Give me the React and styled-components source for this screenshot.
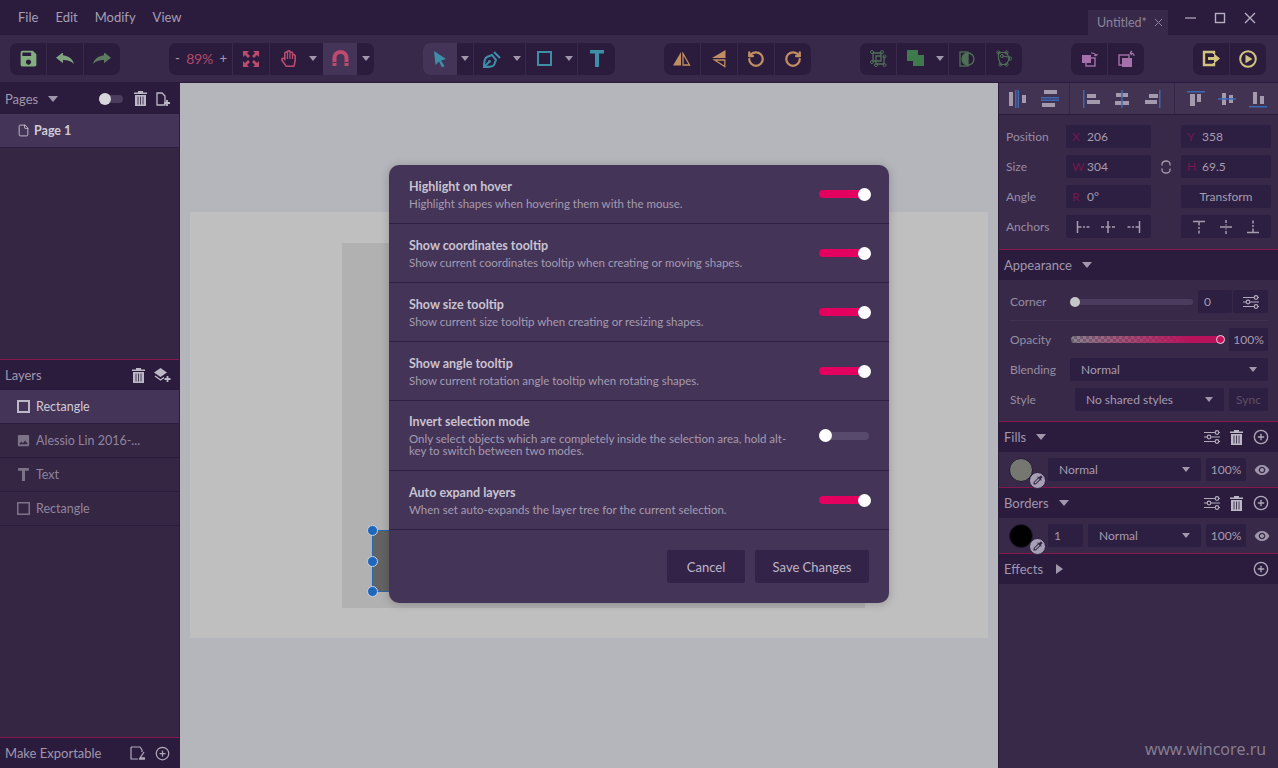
import React from 'react';
import styled, { createGlobalStyle } from 'styled-components';
import { MdSave, MdColorize, MdVisibility, MdImage } from 'react-icons/md';
import { FaRegHandPaper } from 'react-icons/fa';
import { RotateCcw, RotateCw, CirclePlus, File as FileIcon } from 'lucide-react';

const GlobalStyle = createGlobalStyle`
  html, body { margin: 0; padding: 0; background: #2b1c3e; }
  * { box-sizing: border-box; }
`;

const Page = styled.div`
  width: 1278px;
  height: 768px;
  position: relative;
  overflow: hidden;
  display: flex;
  flex-direction: column;
  font-family: Lato, "Open Sans", sans-serif;
  color: #a59cb0;
  font-size: 12px;
`;

/* title bar */
const MenuBar = styled.div`
  height: 35px;
  flex: none;
  background: #2b1c3e;
  display: flex;
  align-items: flex-end;
  padding-left: 18px;
`;
const MenuItem = styled.span`
  font-size: 13px;
  line-height: 35px;
  height: 35px;
  margin-right: ${p => p.$gap}px;
  color: #a69eb1;
`;
const DocTab = styled.div`
  margin-left: auto;
  width: 80px;
  height: 25px;
  background: #38294a;
  display: flex;
  align-items: center;
  padding-left: 9px;
  font-size: 12.5px;
  color: #8c8398;
  gap: 7px;
`;
const WinControls = styled.div`
  display: flex;
  height: 35px;
  width: 110px;
  align-items: center;
  padding-left: 15px;
  gap: 15px;
`;

/* main toolbar */
const Toolbar = styled.div`
  height: 48px;
  flex: none;
  background: #38294a;
  display: flex;
  align-items: center;
  gap: 49px;
  padding: 0 10px;
  border-bottom: 1px solid #2b1c3e;
`;
const ToolGroup = styled.div`
  height: 32px;
  background: #2b1c3e;
  border-radius: 7px;
  display: flex;
  overflow: hidden;
  flex: none;
`;
const Cell = styled.div`
  width: ${p => p.$w}px;
  height: 32px;
  display: flex;
  align-items: center;
  justify-content: ${p => (p.$split ? 'flex-start' : 'center')};
  background: ${p => (p.$active ? '#443457' : 'transparent')};
  border-right: ${p => (p.$sep ? '1px solid #38294a' : 'none')};
`;
const IconSlot = styled.div`
  width: 36px;
  display: flex;
  justify-content: center;
`;
const Caret = styled.span`
  width: 0;
  height: 0;
  flex: none;
  margin-left: ${p => p.$ml || 0}px;
  border-left: ${p => p.$size || 4}px solid transparent;
  border-right: ${p => p.$size || 4}px solid transparent;
  border-top: ${p => (p.$size ? p.$size + 1 : 5)}px solid #a097ad;
`;
const ZoomText = styled.div`
  width: 100%;
  display: flex;
  justify-content: space-between;
  padding: 0 5px 0 6px;
  font-size: 14px;
  color: #a059a0;
  span:first-child, span:last-child { color: #a59cb0; font-size: 13px; }
  span:nth-child(2) { color: #b04a6c; letter-spacing: -0.2px; }
`;

/* body */
const Body = styled.div`
  flex: 1;
  display: flex;
  min-height: 0;
`;
const LeftPanel = styled.div`
  width: 180px;
  flex: none;
  background: #35263f;
  background: #352644;
  display: flex;
  flex-direction: column;
  border-right: 1px solid #2b1c3e;
`;
const PanelHead = styled.div`
  height: ${p => p.$h || 31}px;
  flex: none;
  background: #2b1c3e;
  display: flex;
  align-items: center;
  padding: 0 ${p => p.$pr || 9}px 0 5px;
  font-size: 13px;
  color: #a097ad;
  border-top: ${p => (p.$line ? '1px solid #86184f' : 'none')};
`;
const HeadActions = styled.div`
  margin-left: auto;
  display: flex;
  align-items: center;
  gap: ${p => p.$gap || 7}px;
`;
const MiniSwitch = styled.div`
  position: relative;
  width: 24px;
  height: 8px;
  border-radius: 4px;
  background: #4b3c5e;
  margin-right: 2px;
  &::before {
    content: '';
    position: absolute;
    left: 0;
    top: -2px;
    width: 12px;
    height: 12px;
    border-radius: 50%;
    background: #d7d6da;
  }
`;
const TreeRow = styled.div`
  height: 34px;
  flex: none;
  display: flex;
  align-items: center;
  padding-left: ${p => p.$pl}px;
  gap: ${p => p.$gap}px;
  background: ${p => (p.$active ? '#443457' : 'transparent')};
  border-bottom: 1px solid #2b1c3e;
  color: ${p => (p.$active ? '#d0cbd6' : '#8f859c')};
  font-size: 12.5px;
  font-weight: ${p => (p.$bold ? 700 : 400)};
`;
const Spacer = styled.div`
  flex: 1;
`;

/* canvas */
const Canvas = styled.div`
  flex: 1;
  background: #b5b6bb;
  position: relative;
  overflow: hidden;
`;
const Artboard = styled.div`
  position: absolute;
  left: 10px;
  top: 129px;
  width: 798px;
  height: 426px;
  background: #bfbfbf;
`;
const ImageLayer = styled.div`
  position: absolute;
  left: 152px;
  top: 31px;
  width: 523px;
  height: 365px;
  background: #b1b1b1;
`;
const Selected = styled.div`
  position: absolute;
  left: 30px;
  top: 287px;
  width: 200px;
  height: 62px;
  background: #636363;
  border: 1px solid #2c66ab;
`;
const Handle = styled.div`
  position: absolute;
  left: -6px;
  top: ${p => p.$top}px;
  width: 11px;
  height: 11px;
  border-radius: 50%;
  background: #1f67bd;
  border: 1px solid #c8d3e0;
`;

/* right panel */
const RightPanel = styled.div`
  width: 280px;
  flex: none;
  background: #382949;
  display: flex;
  flex-direction: column;
  border-left: 1px solid #2b1c3e;
`;
const AlignBar = styled.div`
  height: 32px;
  flex: none;
  background: #423352;
  display: flex;
  border-bottom: 1px solid #2b1c3e;
`;
const AlignGroup = styled.div`
  display: flex;
  align-items: center;
  width: ${p => p.$w}px;
  padding-left: ${p => p.$pl}px;
  border-right: ${p => (p.$sep ? '1px solid #35264a' : 'none')};
`;
const AlignCell = styled.div`
  width: 31px;
  display: flex;
  justify-content: center;
`;
const PropGrid = styled.div`
  display: grid;
  grid-template-columns: 60px 85px 30px 90px;
  grid-auto-rows: 23px;
  row-gap: 7px;
  padding: 10px 0 11px 7px;
  align-items: center;
  justify-items: stretch;
`;
const Label = styled.span`
  color: #968da2;
  font-size: 12px;
`;
const Field = styled.div`
  height: 23px;
  background: #2d1f41;
  border-radius: 2px;
  display: flex;
  align-items: center;
  padding-left: ${p => p.$pl ?? 6}px;
  justify-content: ${p => (p.$center ? 'center' : 'flex-start')};
  color: ${p => (p.$dim ? '#5d5069' : '#a59cb0')};
  font-size: 12px;
  width: ${p => (p.$w ? `${p.$w}px` : 'auto')};
  flex: ${p => (p.$w ? 'none' : '1')};
`;
const Prefix = styled.span`
  width: 15px;
  color: #76174f;
  flex: none;
`;
const LinkCell = styled.div`
  display: flex;
  justify-content: center;
`;
const Anchors = styled(Field)`
  justify-content: space-around;
  padding: 0 4px;
`;
const AppearanceBody = styled.div`
  padding: 10px 10px 10px 11px;
  display: flex;
  flex-direction: column;
  gap: 7px;
`;
const ARow = styled.div`
  height: 23px;
  display: flex;
  align-items: center;
  gap: ${p => p.$gap || 0}px;
`;
const ALabel = styled(Label)`
  width: 60px;
  flex: none;
`;
const Rule = styled.div`
  height: 1px;
  background: #413250;
`;
const Track = styled.div`
  position: relative;
  width: ${p => p.$w}px;
  height: 6px;
  margin-left: 3px;
  border-radius: 3px;
  background: #4b3c5e;
`;
const Knob = styled.div`
  position: absolute;
  left: -3px;
  top: -2px;
  width: 10px;
  height: 10px;
  border-radius: 50%;
  background: #c6c5c9;
`;
const OpacityTrack = styled.div`
  position: relative;
  width: 150px;
  height: 7px;
  margin-left: 1px;
  margin-right: 8px;
  border-radius: 4px;
  background:
    linear-gradient(90deg, rgba(190, 14, 88, 0) 0%, #b8125a 80%),
    repeating-conic-gradient(#6c6470 0% 25%, #8b8490 0% 50%) 0 0 / 6px 6px;
`;
const OpacityKnob = styled.div`
  position: absolute;
  right: -4px;
  top: -1px;
  width: 9px;
  height: 9px;
  border-radius: 50%;
  background: #c5125d;
  border: 1px solid #e8d9e2;
`;
const Select = styled(Field)`
  justify-content: space-between;
  padding: 0 ${p => p.$pr || 11}px 0 ${p => p.$pl || 11}px;
`;
const TuneButton = styled(Field)`
  padding: 0;
  justify-content: center;
`;
const StyleRow = styled.div`
  height: 35px;
  flex: none;
  display: flex;
  align-items: center;
  padding-left: 10px;
`;
const SwatchWrap = styled.div`
  position: relative;
  width: 24px;
  height: 24px;
  flex: none;
  margin-right: 15px;
`;
const Swatch = styled.div`
  width: 24px;
  height: 24px;
  border-radius: 50%;
  background: ${p => p.$color};
  border: 1px solid #241733;
`;
const PenBadge = styled.div`
  position: absolute;
  right: -13px;
  bottom: -7px;
  width: 17px;
  height: 17px;
  border-radius: 50%;
  background: #a79fb4;
  border: 1px solid #2b1c3e;
  display: flex;
  align-items: center;
  justify-content: center;
  color: #38294a;
`;
const EyeSlot = styled.div`
  width: 31px;
  display: flex;
  justify-content: center;
  color: #a097ad;
`;

/* dialog */
const Dialog = styled.div`
  position: absolute;
  left: 389px;
  top: 165px;
  width: 500px;
  height: 438px;
  background: #443457;
  border-radius: 10px;
  box-shadow: 0 1px 10px rgba(0, 0, 0, 0.22);
  display: flex;
  flex-direction: column;
`;
const SettingRow = styled.div`
  flex: none;
  height: ${p => p.$h}px;
  display: flex;
  align-items: center;
  justify-content: space-between;
  padding: 0 20px;
  border-bottom: 1px solid #2f2143;
`;
const SettingText = styled.div`
  width: 392px;
`;
const SettingTitle = styled.div`
  font-size: 12.5px;
  font-weight: 700;
  line-height: 15px;
  color: #c9c3d1;
`;
const SettingDesc = styled.div`
  font-size: 11.5px;
  line-height: 12px;
  margin-top: 4px;
  color: #a59cb2;
`;
const Toggle = styled.div`
  position: relative;
  width: 50px;
  height: 8px;
  border-radius: 4px;
  background: ${p => (p.$on ? '#e4005e' : '#584a6c')};
  &::after {
    content: '';
    position: absolute;
    top: -2.5px;
    left: ${p => (p.$on ? '39px' : '0')};
    width: 13px;
    height: 13px;
    border-radius: 50%;
    background: #fff;
  }
`;
const DialogFooter = styled.div`
  flex: 1;
  display: flex;
  justify-content: flex-end;
  gap: 10px;
  padding: 20px 20px 0 0;
`;
const Button = styled.div`
  height: 33px;
  width: ${p => p.$w}px;
  background: #342349;
  border-radius: 2px;
  color: #bdb6c6;
  font-size: 13px;
  display: flex;
  align-items: center;
  justify-content: center;
`;
const Watermark = styled.div`
  position: absolute;
  right: 12px;
  bottom: 8px;
  font-family: "Open Sans", sans-serif;
  font-size: 16px;
  color: rgba(255, 255, 255, 0.42);
`;

const GREEN = '#83ae7f';
const PINK = '#bd4b70';
const TEAL = '#3f8ea8';
const TAN = '#c08e62';
const DIMGREEN = '#4f7055';
const VIOLET = '#a671ab';
const YELLOW = '#d2c47f';
const GREY = '#a097ad';
const LINE = '#3b68b2';
const BAR = '#a39bad';

const Ico = ({ w = 20, h = 20, vb, children }) => (
  <svg width={w} height={h} viewBox={vb || `0 0 ${w} ${h}`} fill="none">{children}</svg>
);

const ArrowBack = ({ color, flip }) => (
  <svg width="18" height="11" viewBox="3 6 18 14" preserveAspectRatio="none">
    <path d="M10 9V5l-7 7 7 7v-4.1c5 0 8.5 1.6 11 5.1-1-5-4-10-11-11z" fill={color} transform={flip ? 'matrix(-1 0 0 1 24 0)' : undefined} />
  </svg>
);

const FitIcon = () => (
  <Ico w={18} h={18}>
    <g fill={PINK}>
      <path d="M1 1h6L5 3l3 3-2 2-3-3-2 2z" />
      <path d="M17 1h-6l2 2-3 3 2 2 3-3 2 2z" />
      <path d="M1 17h6l-2-2 3-3-2-2-3 3-2-2z" />
      <path d="M17 17h-6l2-2-3-3 2-2 3 3 2-2z" />
    </g>
  </Ico>
);
const MagnetIcon = () => (
  <Ico w={17} h={17}>
    <path d="M2.5 16V8a6 6 0 0 1 12 0v8" stroke={PINK} strokeWidth="4" />
    <path d="M0.5 12.5h4M12.5 12.5h4" stroke="#443457" strokeWidth="1" />
  </Ico>
);
const PointerIcon = () => (
  <Ico w={14} h={18}>
    <path d="M1 1l12 8-5 1.5 3.5 5.5-2.5 1.5L6 11.5 2.5 15z" fill={TEAL} />
  </Ico>
);
const PenIcon = () => (
  <Ico w={18} h={18}>
    <path d="M1 17c0-5 1-9 3-10l5-2 4 5-2 5c-1 2-5 2-10 2z" stroke={TEAL} strokeWidth="2" />
    <path d="M1 17l5-5M11 2l6 6" stroke={TEAL} strokeWidth="2" />
    <circle cx="6.5" cy="11.5" r="1.4" fill={TEAL} />
  </Ico>
);
const SquareIcon = ({ color = TEAL, size = 15, sw = 2 }) => (
  <Ico w={size} h={size}>
    <rect x={sw / 2} y={sw / 2} width={size - sw} height={size - sw} stroke={color} strokeWidth={sw} />
  </Ico>
);
const TIcon = ({ color = TEAL, w = 14, h = 17 }) => (
  <svg width={w} height={h} viewBox="0 0 14 17">
    <path d="M0 0h14v3.5H9V17H5V3.5H0z" fill={color} />
  </svg>
);
const FlipH = () => (
  <Ico w={18} h={14}>
    <path d="M8 0v13.5H0z" fill={TAN} />
    <path d="M10 1.5l6.5 11.5H10z" stroke={TAN} strokeWidth="1.3" />
  </Ico>
);
const FlipV = () => (
  <Ico w={14} h={18}>
    <path d="M13.5 0v8H0z" fill={TAN} />
    <path d="M12.8 10H2.5l10.3 6.5z" stroke={TAN} strokeWidth="1.3" />
  </Ico>
);
const GroupIcon = () => (
  <Ico w={17} h={17}>
    <path d="M3 3h8v3M14 6v8H6v-3M3 3v8h3M6 6h5v5H6z" stroke={DIMGREEN} strokeWidth="1.3" />
    {[[2, 2], [12, 2], [2, 12], [14.5, 6.5], [14.5, 15], [6, 15]].map(([x, y]) => (
      <circle key={`${x}${y}`} cx={x} cy={y} r="1.5" stroke={DIMGREEN} />
    ))}
  </Ico>
);
const UnionIcon = () => (
  <Ico w={17} h={17}>
    <path d="M0 0h11v5h6v11H6v-5H0z" fill="#3f7a4c" />
  </Ico>
);
const MaskIcon = () => (
  <Ico w={16} h={16}>
    <rect x="1" y="1" width="8" height="14" stroke={DIMGREEN} strokeWidth="1.3" />
    <circle cx="9" cy="8" r="6" stroke={DIMGREEN} strokeWidth="1.3" />
    <path d="M9 2a6 6 0 0 0 0 12z" fill={DIMGREEN} />
  </Ico>
);
const NodesIcon = () => (
  <Ico w={17} h={17}>
    <path d="M2.5 2.5h8l3 6-3 6h-6l-2-6zM6 6l6 1" stroke={DIMGREEN} strokeWidth="1.2" />
    {[[2.5, 2.5], [10.5, 2.5], [14, 8.5], [10.5, 14.5], [4.5, 14.5], [6, 6]].map(([x, y]) => (
      <circle key={`${x}${y}`} cx={x} cy={y} r="1.6" stroke={DIMGREEN} />
    ))}
  </Ico>
);
const ArrangeIcon = ({ back }) => (
  <Ico w={17} h={17}>
    {back ? (
      <>
        <rect x="1" y="5" width="10" height="10" stroke={VIOLET} strokeWidth="1.4" />
        <rect x="4" y="8" width="10" height="9" fill={VIOLET} />
      </>
    ) : (
      <>
        <rect x="5" y="8" width="9" height="8" stroke={VIOLET} strokeWidth="1.4" />
        <rect x="1" y="5" width="9" height="8" fill={VIOLET} />
      </>
    )}
    <path d={back ? 'M16 6c0-2-1-3-4-3M12 3l2-2M12 3l2 2' : 'M10 3c3 0 5 1 5 3M15 6l-2-1M15 6l1.5-2'} stroke={VIOLET} strokeWidth="1.2" />
  </Ico>
);
const ExportIcon = () => (
  <Ico w={19} h={17}>
    <path d="M12 4V2H2v13h10v-2" stroke={YELLOW} strokeWidth="2.4" />
    <path d="M6 7h6V3.5L18 8.5l-6 5V10H6z" fill={YELLOW} />
  </Ico>
);
const PlayIcon = () => (
  <Ico w={18} h={18}>
    <circle cx="9" cy="9" r="7.8" stroke={YELLOW} strokeWidth="2" />
    <path d="M6.5 4.8L13.5 9l-7 4.2z" fill={YELLOW} />
  </Ico>
);

const TrashIcon = ({ color = '#bdb8c5', size = 13 }) => (
  <svg width={size} height={size + 2} viewBox="0 0 13 15">
    <path d="M0 1.5h4V0h5v1.5h4V3H0zM1 4h11v11H1z" fill={color} />
    <path d="M4 5.5v8M6.5 5.5v8M9 5.5v8" stroke="#2b1c3e" strokeWidth=".8" />
  </svg>
);
const PageAddIcon = () => (
  <Ico w={14} h={14}>
    <path d="M1 1h5l3 3v9H1z" stroke="#bdb8c5" strokeWidth="1.3" />
    <path d="M11 8v6M8 11h6" stroke="#bdb8c5" strokeWidth="1.8" />
  </Ico>
);
const LayerAddIcon = () => (
  <Ico w={17} h={14}>
    <path d="M6.5 0L13 4.5 6.5 9 0 4.5z" fill="#bdb8c5" />
    <path d="M1 8l5.5 4L10 9.5" stroke="#bdb8c5" strokeWidth="1.4" />
    <path d="M13.5 8v6M10.5 11h6" stroke="#bdb8c5" strokeWidth="1.8" />
  </Ico>
);
const ExportableIcon = () => (
  <Ico w={16} h={14}>
    <path d="M1 1h9l2 3v2M1 1v12h7" stroke="#b0a9ba" strokeWidth="1.2" />
    <path d="M14 6l-4 6h5M9 13h6" stroke="#b0a9ba" strokeWidth="1.3" />
  </Ico>
);
const TuneIcon = () => (
  <Ico w={16} h={14}>
    <g stroke="#b0a9ba" strokeWidth="1.2">
      <path d="M0 2.5h11M15 2.5h1M0 7h3M7 7h9M0 11.5h11M15 11.5h1" />
      <circle cx="13" cy="2.5" r="1.8" />
      <circle cx="5" cy="7" r="1.8" />
      <circle cx="13" cy="11.5" r="1.8" />
    </g>
  </Ico>
);
const LinkIcon = () => (
  <Ico w={10} h={14}>
    <path d="M1 5.5V4a4 3 0 0 1 8 0v1.5M1 8.5V10a4 3 0 0 0 8 0V8.5" stroke="#a59cb0" strokeWidth="1.3" />
  </Ico>
);
const Bars = ({ rects, lines }) => (
  <Ico w={20} h={20}>
    {rects.map(([x, y, w, h]) => <rect key={`${x}-${y}`} x={x} y={y} width={w} height={h} fill={BAR} />)}
    {lines.map(([x, y, w, h]) => <rect key={`l${x}-${y}`} x={x} y={y} width={w} height={h} fill={LINE} />)}
  </Ico>
);

const Anchor = ({ d, t }) => (
  <Ico w={14} h={14}>
    <path d={d} stroke="#a59cb0" strokeWidth="1.5" strokeDasharray={t ? undefined : undefined} />
  </Ico>
);

const ALIGN = [
  [[[0, 3, 4, 14], [13, 6, 4, 8]], [[6, 1, 1.5, 18], [8.5, 1, 1.5, 18]]],
  [[[4, 1, 13, 4], [2, 14, 13, 4]], [[1, 8, 18, 1.5], [1, 10.5, 18, 1.5]]],
  [[[6, 5, 9, 4], [6, 11, 13, 4]], [[2, 1, 1.5, 18]]],
  [[[4, 4, 12, 4], [3, 12, 14, 4]], [[9.2, 1, 1.5, 18]]],
  [[[6, 5, 9, 4], [2, 11, 12, 4]], [[16, 1, 1.5, 18]]],
  [[[4, 5, 5, 12], [11, 5, 4, 8]], [[1, 2, 18, 1.5]]],
  [[[5, 4, 4, 12], [12, 6, 4, 8]], [[1, 9.2, 18, 1.5]]],
  [[[5, 3, 4, 12], [12, 7, 4, 8]], [[1, 17, 18, 1.5]]],
];

const SETTINGS = [
  { title: 'Highlight on hover', desc: 'Highlight shapes when hovering them with the mouse.', on: true, h: 59 },
  { title: 'Show coordinates tooltip', desc: 'Show current coordinates tooltip when creating or moving shapes.', on: true, h: 59 },
  { title: 'Show size tooltip', desc: 'Show current size tooltip when creating or resizing shapes.', on: true, h: 59 },
  { title: 'Show angle tooltip', desc: 'Show current rotation angle tooltip when rotating shapes.', on: true, h: 59 },
  { title: 'Invert selection mode', desc: 'Only select objects which are completely inside the selection area, hold alt-key to switch between two modes.', on: false, h: 70 },
  { title: 'Auto expand layers', desc: 'When set auto-expands the layer tree for the current selection.', on: true, h: 59 },
];

const StyleSection = ({ title, children, open = true, tools = true }) => (
  <>
    <PanelHead $line $pr={9}>
      {title}
      {open
        ? <Caret $size={5} $ml={10} />
        : <PlayCaret />}
      <HeadActions $gap={10}>
        {tools && <TuneIcon />}
        {tools && <TrashIcon />}
        <CirclePlus size={16} color="#b0a9ba" strokeWidth={2} />
      </HeadActions>
    </PanelHead>
    {children}
  </>
);
const PlayCaret = styled.span`
  width: 0;
  height: 0;
  margin-left: 13px;
  border-top: 5.5px solid transparent;
  border-bottom: 5.5px solid transparent;
  border-left: 7px solid #a097ad;
`;

export default function App() {
  return (
    <Page>
      <GlobalStyle />
      <MenuBar>
        <MenuItem $gap={17}>File</MenuItem>
        <MenuItem $gap={17}>Edit</MenuItem>
        <MenuItem $gap={17}>Modify</MenuItem>
        <MenuItem $gap={0}>View</MenuItem>
        <DocTab>
          Untitled*
          <Ico w={9} h={9}><path d="M1 1l7 7M8 1L1 8" stroke="#8c8398" strokeWidth="1" /></Ico>
        </DocTab>
        <WinControls>
          <Ico w={15} h={12}><path d="M2 6h11" stroke="#b5aec0" strokeWidth="1.2" /></Ico>
          <Ico w={15} h={12}><rect x="2.5" y="1.5" width="9" height="9" stroke="#b5aec0" strokeWidth="1.4" /></Ico>
          <Ico w={15} h={12}><path d="M2 1l10 10M12 1L2 11" stroke="#b5aec0" strokeWidth="1.4" /></Ico>
        </WinControls>
      </MenuBar>

      <Toolbar>
        <ToolGroup>
          <Cell $w={37} $sep><MdSave size={21} color={GREEN} /></Cell>
          <Cell $w={37} $sep><ArrowBack color="#7fa37c" /></Cell>
          <Cell $w={36}><ArrowBack color="#5b7a60" flip /></Cell>
        </ToolGroup>
        <ToolGroup>
          <Cell $w={64} $sep><ZoomText><span>-</span><span>89%</span><span>+</span></ZoomText></Cell>
          <Cell $w={37} $sep><FitIcon /></Cell>
          <Cell $w={53} $split><IconSlot><FaRegHandPaper size={17} color={PINK} /></IconSlot><Caret $ml={3} /></Cell>
          <Cell $w={34} $active><MagnetIcon /></Cell>
          <Cell $w={17}><Caret /></Cell>
        </ToolGroup>
        <ToolGroup>
          <Cell $w={34} $active><PointerIcon /></Cell>
          <Cell $w={17} $sep><Caret /></Cell>
          <Cell $w={52} $sep $split><IconSlot><PenIcon /></IconSlot><Caret $ml={3} /></Cell>
          <Cell $w={52} $sep $split><IconSlot><SquareIcon /></IconSlot><Caret $ml={3} /></Cell>
          <Cell $w={37}><TIcon /></Cell>
        </ToolGroup>
        <ToolGroup>
          <Cell $w={37} $sep><FlipH /></Cell>
          <Cell $w={37} $sep><FlipV /></Cell>
          <Cell $w={37} $sep><RotateCcw size={18} color={TAN} strokeWidth={3} /></Cell>
          <Cell $w={36}><RotateCw size={18} color={TAN} strokeWidth={3} /></Cell>
        </ToolGroup>
        <ToolGroup>
          <Cell $w={37} $sep><GroupIcon /></Cell>
          <Cell $w={52} $sep $split><IconSlot><UnionIcon /></IconSlot><Caret $ml={3} /></Cell>
          <Cell $w={37} $sep><MaskIcon /></Cell>
          <Cell $w={36}><NodesIcon /></Cell>
        </ToolGroup>
        <ToolGroup>
          <Cell $w={37} $sep><ArrangeIcon /></Cell>
          <Cell $w={36}><ArrangeIcon back /></Cell>
        </ToolGroup>
        <ToolGroup>
          <Cell $w={37} $sep><ExportIcon /></Cell>
          <Cell $w={36}><PlayIcon /></Cell>
        </ToolGroup>
      </Toolbar>

      <Body>
        <LeftPanel>
          <PanelHead>
            Pages
            <Caret $size={5} $ml={10} />
            <HeadActions $gap={9}>
              <MiniSwitch />
              <TrashIcon />
              <PageAddIcon />
            </HeadActions>
          </PanelHead>
          <TreeRow $active $bold $pl={17} $gap={4}><FileIcon size={13} color="#d0cbd6" strokeWidth={1.6} />Page 1</TreeRow>
          <Spacer />
          <PanelHead $line $pr={8}>
            Layers
            <HeadActions $gap={9}>
              <TrashIcon />
              <LayerAddIcon />
            </HeadActions>
          </PanelHead>
          <TreeRow $active $pl={17} $gap={6}><SquareIcon color="#bdb8c5" size={13} sw={2} />Rectangle</TreeRow>
          <TreeRow $pl={16} $gap={5}><MdImage size={15} color="#7d7389" />Alessio Lin 2016-...</TreeRow>
          <TreeRow $pl={17} $gap={6}><TIcon color="#7d7389" w={13} h={13} />Text</TreeRow>
          <TreeRow $pl={17} $gap={6}><SquareIcon color="#7d7389" size={13} sw={1.5} />Rectangle</TreeRow>
          <Spacer />
          <PanelHead $line $pr={9}>
            Make Exportable
            <HeadActions $gap={9}>
              <ExportableIcon />
              <CirclePlus size={15} color="#b0a9ba" strokeWidth={2} />
            </HeadActions>
          </PanelHead>
        </LeftPanel>

        <Canvas>
          <Artboard>
            <ImageLayer>
              <Selected>
                <Handle $top={-6} />
                <Handle $top={25} />
                <Handle $top={55} />
              </Selected>
            </ImageLayer>
          </Artboard>
        </Canvas>

        <RightPanel>
          <AlignBar>
            <AlignGroup $w={71} $pl={4} $sep>
              {ALIGN.slice(0, 2).map(([r, l], i) => <AlignCell key={i}><Bars rects={r} lines={l} /></AlignCell>)}
            </AlignGroup>
            <AlignGroup $w={105} $pl={5} $sep>
              {ALIGN.slice(2, 5).map(([r, l], i) => <AlignCell key={i}><Bars rects={r} lines={l} /></AlignCell>)}
            </AlignGroup>
            <AlignGroup $w={103} $pl={5}>
              {ALIGN.slice(5).map(([r, l], i) => <AlignCell key={i}><Bars rects={r} lines={l} /></AlignCell>)}
            </AlignGroup>
          </AlignBar>

          <PropGrid>
            <Label>Position</Label>
            <Field><Prefix>X</Prefix>206</Field>
            <span />
            <Field><Prefix>Y</Prefix>358</Field>
            <Label>Size</Label>
            <Field><Prefix>W</Prefix>304</Field>
            <LinkCell><LinkIcon /></LinkCell>
            <Field><Prefix>H</Prefix>69.5</Field>
            <Label>Angle</Label>
            <Field><Prefix>R</Prefix>0°</Field>
            <span />
            <Field $center $pl={0}>Transform</Field>
            <Label>Anchors</Label>
            <Anchors>
              <Anchor d="M1.5 1v12M1.5 7h4M7 7h2M10.5 7h3" />
              <Anchor d="M7 1v12M0 7h3M4.5 7h5M11 7h3" />
              <Anchor d="M12.5 1v12M12.5 7h-4M7 7h-2M3.5 7h-3" />
            </Anchors>
            <span />
            <Anchors>
              <Anchor d="M1 1.5h12M7 1.5v4M7 7v2M7 10.5v3" />
              <Anchor d="M1 7h12M7 0v3M7 4.5v1M7 8.5v1M7 11v3" />
              <Anchor d="M1 12.5h12M7 12.5v-4M7 7v-2M7 3.5v-3" />
            </Anchors>
          </PropGrid>

          <PanelHead $line>
            Appearance
            <Caret $size={5} $ml={10} />
          </PanelHead>
          <AppearanceBody>
            <ARow>
              <ALabel>Corner</ALabel>
              <Track $w={121}><Knob /></Track>
              <Field $w={34} style={{ marginLeft: 5 }}>0</Field>
              <TuneButton $w={35} style={{ marginLeft: 1 }}><TuneIcon /></TuneButton>
            </ARow>
            <Rule />
            <ARow>
              <ALabel>Opacity</ALabel>
              <OpacityTrack><OpacityKnob /></OpacityTrack>
              <Field $center $pl={0}>100%</Field>
            </ARow>
            <ARow>
              <ALabel>Blending</ALabel>
              <Select>Normal<Caret $size={4} /></Select>
            </ARow>
            <ARow $gap={5}>
              <ALabel>Style</ALabel>
              <Select $w={149}>No shared styles<Caret $size={4} /></Select>
              <Field $center $pl={0} $dim>Sync</Field>
            </ARow>
          </AppearanceBody>

          <StyleSection title="Fills">
            <StyleRow>
              <SwatchWrap>
                <Swatch $color="#747870" />
                <PenBadge><MdColorize size={12} /></PenBadge>
              </SwatchWrap>
              <Select $w={153}>Normal<Caret $size={4} /></Select>
              <Field $w={40} $center $pl={0} style={{ marginLeft: 5 }}>100%</Field>
              <EyeSlot><MdVisibility size={16} /></EyeSlot>
            </StyleRow>
          </StyleSection>
          <StyleSection title="Borders">
            <StyleRow>
              <SwatchWrap>
                <Swatch $color="#000" />
                <PenBadge><MdColorize size={12} /></PenBadge>
              </SwatchWrap>
              <Field $w={35}>1</Field>
              <Select $w={113} style={{ marginLeft: 5 }}>Normal<Caret $size={4} /></Select>
              <Field $w={40} $center $pl={0} style={{ marginLeft: 5 }}>100%</Field>
              <EyeSlot><MdVisibility size={16} /></EyeSlot>
            </StyleRow>
          </StyleSection>
          <StyleSection title="Effects" open={false} tools={false} />
        </RightPanel>
      </Body>

      <Dialog>
        {SETTINGS.map(s => (
          <SettingRow key={s.title} $h={s.h}>
            <SettingText>
              <SettingTitle>{s.title}</SettingTitle>
              <SettingDesc>{s.desc}</SettingDesc>
            </SettingText>
            <Toggle $on={s.on} />
          </SettingRow>
        ))}
        <DialogFooter>
          <Button $w={78}>Cancel</Button>
          <Button $w={114}>Save Changes</Button>
        </DialogFooter>
      </Dialog>

      <Watermark>www.wincore.ru</Watermark>
    </Page>
  );
}
